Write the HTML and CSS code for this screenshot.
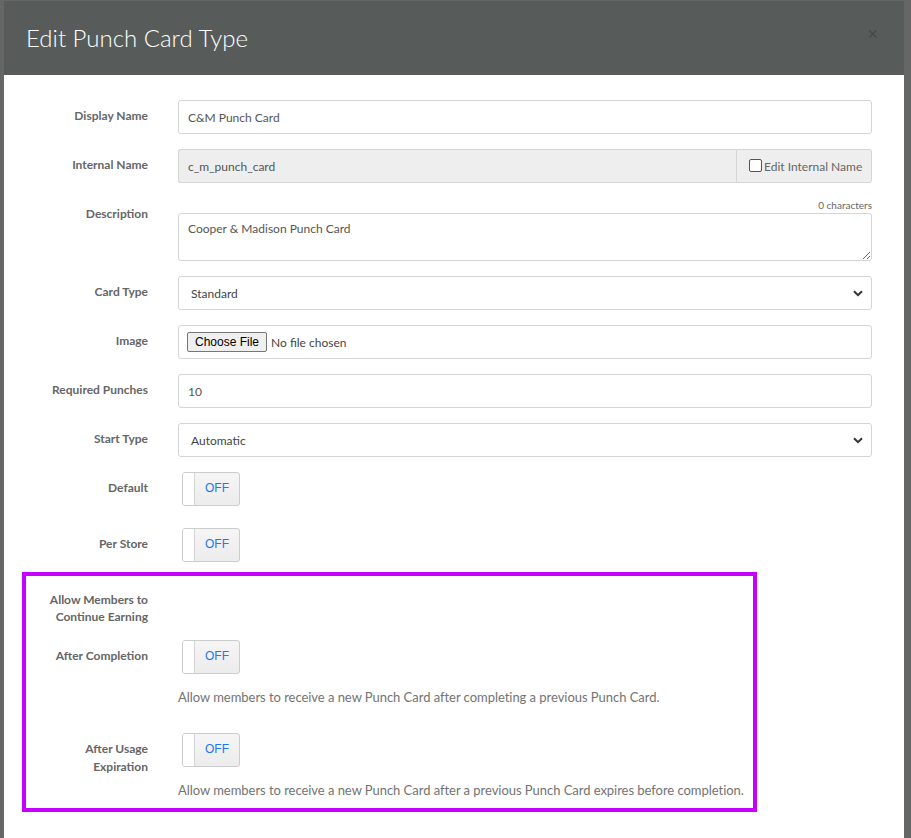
FILE: index.html
```html
<!DOCTYPE html>
<html lang="en">
<head>
<meta charset="utf-8">
<title>Edit Punch Card Type</title>
<link rel="stylesheet" href="styles.css">
</head>
<body>
<div class="backdrop">
  <div class="modal">
    <div class="modal-header">
      <h1 class="modal-title">Edit Punch Card Type</h1>
      <span class="close">×</span>
    </div>
    <div class="modal-body">
      <div class="row">
        <label class="label">Display Name</label>
        <div class="field"><input class="input" type="text" value="C&amp;M Punch Card"></div>
      </div>
      <div class="row">
        <label class="label">Internal Name</label>
        <div class="field">
          <div class="input-group">
            <input class="input input-readonly" type="text" value="c_m_punch_card" readonly>
            <span class="addon"><span class="checkbox"></span>Edit Internal Name</span>
          </div>
        </div>
      </div>
      <div class="row">
        <label class="label">Description</label>
        <div class="field">
          <div class="counter">0 characters</div>
          <textarea class="input textarea">Cooper &amp; Madison Punch Card</textarea>
        </div>
      </div>
      <div class="row">
        <label class="label">Card Type</label>
        <div class="field">
          <div class="select"><span>Standard</span>
            <svg class="chev" width="10" height="7" viewBox="0 0 10 7"><path d="M1 1.2 L5 5.2 L9 1.2" fill="none" stroke="#333" stroke-width="2"/></svg>
          </div>
        </div>
      </div>
      <div class="row">
        <label class="label">Image</label>
        <div class="field">
          <div class="file-box"><span class="file-btn">Choose File</span><span class="file-text">No file chosen</span></div>
        </div>
      </div>
      <div class="row">
        <label class="label">Required Punches</label>
        <div class="field"><input class="input" type="text" value="10"></div>
      </div>
      <div class="row">
        <label class="label">Start Type</label>
        <div class="field">
          <div class="select"><span>Automatic</span>
            <svg class="chev" width="10" height="7" viewBox="0 0 10 7"><path d="M1 1.2 L5 5.2 L9 1.2" fill="none" stroke="#333" stroke-width="2"/></svg>
          </div>
        </div>
      </div>
      <div class="row row-toggle">
        <label class="label">Default</label>
        <div class="field"><div class="switch"><span class="handle"></span><span class="off">OFF</span></div></div>
      </div>
      <div class="row row-toggle">
        <label class="label">Per Store</label>
        <div class="field"><div class="switch"><span class="handle"></span><span class="off">OFF</span></div></div>
      </div>
      <div class="row row-heading">
        <label class="label">Allow Members to Continue Earning</label>
        <div class="field"></div>
      </div>
      <div class="row row-help">
        <label class="label">After Completion</label>
        <div class="field">
          <div class="switch"><span class="handle"></span><span class="off">OFF</span></div>
          <p class="help">Allow members to receive a new Punch Card after completing a previous Punch Card.</p>
        </div>
      </div>
      <div class="row row-help">
        <label class="label">After Usage Expiration</label>
        <div class="field">
          <div class="switch"><span class="handle"></span><span class="off">OFF</span></div>
          <p class="help">Allow members to receive a new Punch Card after a previous Punch Card expires before completion.</p>
        </div>
      </div>
      <div class="highlight"></div>
    </div>
  </div>
</div>
</body>
</html>
```
FILE: styles.css
```css
html, body {
  margin: 0;
  padding: 0;
  height: 100%;
  overflow: hidden;
}
body {
  background: #656767;
  font-family: Lato, "Noto Sans", sans-serif;
}
.backdrop {
  padding: 1px 0 0 4px;
}
.modal {
  width: 900px;
  background: #fff;
}
.modal-header {
  height: 74px;
  background: #575c5b;
  display: flex;
  align-items: center;
  justify-content: space-between;
  padding: 0 24px 0 22px;
}
.modal-title {
  margin: 0;
  font-family: Lato, sans-serif;
  font-weight: 300;
  font-size: 24px;
  color: #fff;
  position: relative;
  top: -1px;
}
.close {
  font-family: "Liberation Sans", sans-serif;
  font-size: 18px;
  color: #434848;
  line-height: 1;
  position: relative;
  top: -4px;
  left: -2px;
}
.modal-body {
  position: relative;
  padding: 25px 32px 60px 0;
}
.row {
  display: grid;
  grid-template-columns: 144px 1fr;
  column-gap: 30px;
  margin-bottom: 15px;
}
.label {
  text-align: right;
  padding: 7px 0 0 30px;
  font-size: 12px;
  font-weight: 700;
  line-height: 17px;
  color: #666;
}
.field {
  min-width: 0;
}
.input {
  display: block;
  box-sizing: border-box;
  width: 100%;
  height: 34px;
  margin: 0;
  border: 1px solid #d2d6d6;
  border-radius: 3px;
  padding: 0 9px;
  font-family: Lato, sans-serif;
  font-size: 12px;
  color: #555;
  background: #fff;
  outline: none;
}
.input-group {
  display: flex;
  height: 34px;
}
.input-group .input-readonly {
  flex: 1;
  background: #eee;
  border-radius: 3px 0 0 3px;
  border-right: 0;
}
.addon {
  box-sizing: border-box;
  width: 136px;
  height: 34px;
  display: flex;
  align-items: center;
  padding-left: 12px;
  background: #eee;
  border: 1px solid #d2d6d6;
  border-radius: 0 3px 3px 0;
  font-size: 12px;
  color: #666;
}
.checkbox {
  width: 11px;
  height: 11px;
  border: 1px solid #555;
  border-radius: 2px;
  background: #fff;
  margin-right: 2px;
  position: relative;
  top: -1px;
}
.counter {
  text-align: right;
  font-size: 10px;
  line-height: 15px;
  color: #666;
}
.textarea {
  height: 48px;
  padding: 7px 9px;
  resize: vertical;
  line-height: 15px;
}
.select {
  box-sizing: border-box;
  height: 34px;
  border: 1px solid #d2d6d6;
  border-radius: 3px;
  display: flex;
  align-items: center;
  justify-content: space-between;
  padding: 0 8px 0 12px;
  font-size: 12px;
  color: #444;
}
.chev {
  display: block;
}
.file-box {
  box-sizing: border-box;
  height: 34px;
  border: 1px solid #d2d6d6;
  border-radius: 3px;
  display: flex;
  align-items: center;
  padding-left: 8px;
}
.file-btn {
  box-sizing: border-box;
  height: 20px;
  padding: 0 7px;
  display: flex;
  align-items: center;
  background: #efefef;
  border: 1px solid #767676;
  border-radius: 2px;
  font-family: "Liberation Sans", Arial, sans-serif;
  font-size: 12px;
  color: #000;
}
.file-text {
  margin-left: 4px;
  font-size: 12px;
  color: #444;
}
.row-toggle {
  margin-bottom: 22px;
}
.switch {
  box-sizing: border-box;
  width: 58px;
  height: 34px;
  margin-left: 4px;
  border: 1px solid #ccc;
  border-radius: 3px;
  display: flex;
  overflow: hidden;
  background: linear-gradient(#f5f5f5, #ececec);
}
.handle {
  width: 11px;
  background: #fff;
  border-right: 1px solid #d4d4d4;
}
.off {
  flex: 1;
  display: flex;
  align-items: center;
  justify-content: center;
  font-family: "Liberation Sans", Arial, sans-serif;
  font-size: 12px;
  color: #1c78f2;
  padding-bottom: 2px;
}
.row-heading {
  margin-bottom: 15px;
}
.row-help {
  margin-bottom: 27px;
}
.row-help .label {
  line-height: 18px;
}
.help {
  margin: 14px 0 0;
  font-size: 13px;
  letter-spacing: -0.04px;
  line-height: 18px;
  color: #737373;
}
.highlight {
  position: absolute;
  left: 18px;
  top: 497px;
  width: 735px;
  height: 240px;
  box-sizing: border-box;
  border: 4px solid #c600ff;
  pointer-events: none;
}
```
